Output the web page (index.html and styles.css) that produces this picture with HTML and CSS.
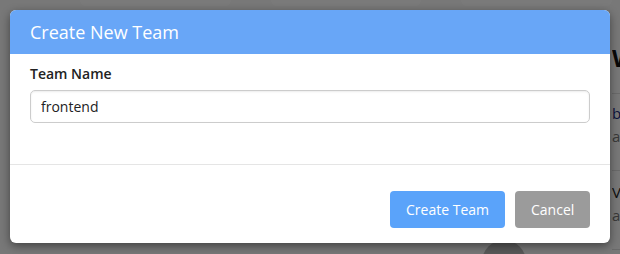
FILE: index.html
```html
<!DOCTYPE html>
<html>
<head>
<meta charset="utf-8">
<link rel="stylesheet" href="styles.css">
</head>
<body>
<div class="page">
  <div class="page-main">
    <div class="tabs">
      <span class="tab"></span><span class="tab"></span><span class="tab"></span>
    </div>
  </div>
  <div class="page-side">
    <div class="side-title">Welcome</div>
    <div class="side-item">
      <div class="side-link">bootstrap</div>
      <div class="side-meta">ago</div>
    </div>
    <div class="side-item">
      <div class="side-link dark">Vault</div>
      <div class="side-meta">ago</div>
    </div>
  </div>
  <div class="avatar"></div>
</div>
<div class="overlay">
  <div class="modal">
    <div class="modal-header">Create New Team</div>
    <div class="modal-body">
      <label class="field-label">Team Name</label>
      <input class="field-input" type="text" value="frontend">
    </div>
    <div class="modal-footer">
      <button class="btn btn-primary">Create Team</button>
      <button class="btn btn-secondary">Cancel</button>
    </div>
  </div>
</div>
</body>
</html>
```
FILE: styles.css
```css
* { box-sizing: border-box; }
html, body { margin: 0; padding: 0; }
body {
  width: 620px;
  height: 254px;
  overflow: hidden;
  font-family: "Open Sans", "Noto Sans", sans-serif;
  background: #fff;
  position: relative;
}
.page {
  display: flex;
  width: 620px;
  height: 254px;
  background: #fafafa;
  overflow: hidden;
  position: relative;
}
.page-main {
  width: 612px;
  flex: none;
}
.tabs {
  display: flex;
  gap: 40px;
  padding-left: 80px;
}
.tab {
  width: 160px;
  height: 6px;
  background: #fff;
  border-radius: 0 0 8px 8px;
}
.page-side {
  flex: 1;
  min-width: 0;
  overflow: hidden;
  white-space: nowrap;
  padding-top: 44px;
}
.side-title {
  font-size: 24px;
  font-weight: 700;
  color: #111;
  line-height: 28px;
  padding-bottom: 21px;
  border-bottom: 1px solid #ddd;
}
.side-item {
  padding: 8px 0 12px;
  border-bottom: 1px solid #ddd;
}
.side-item + .side-item { padding-top: 10px; }
.side-link {
  font-size: 15px;
  color: #1c2b80;
  line-height: 22px;
}
.side-link.dark { color: #222; }
.side-meta {
  font-size: 15px;
  color: #777;
  line-height: 24px;
  padding-bottom: 10px;
}
.avatar {
  position: absolute;
  left: 482px;
  top: 240px;
  width: 44px;
  height: 44px;
  border-radius: 50%;
  background: #bbb;
}
.overlay {
  position: absolute;
  inset: 0;
  background: rgba(0, 0, 0, 0.52);
  padding: 10px;
}
.modal {
  width: 600px;
  height: 233px;
  background: #fff;
  border-radius: 6px;
  box-shadow: 0 3px 10px rgba(0, 0, 0, 0.45);
  overflow: hidden;
  display: flex;
  flex-direction: column;
}
.modal-header {
  height: 44px;
  background: #68a6f7;
  color: #fff;
  font-size: 18px;
  line-height: 44px;
  padding-left: 20px;
}
.modal-body {
  padding: 10px 20px 0;
  height: 111px;
  border-bottom: 1px solid #e5e5e5;
  display: flex;
  flex-direction: column;
}
.field-label {
  font-size: 14px;
  font-weight: 600;
  color: #222;
  line-height: 20px;
  margin-bottom: 6px;
}
.field-input {
  width: 560px;
  height: 33px;
  border: 1px solid #cccccc;
  border-radius: 5px;
  box-shadow: inset 0 1px 2px rgba(0, 0, 0, 0.08);
  padding: 0 10px;
  font-family: "Open Sans", "Noto Sans", sans-serif;
  font-size: 14px;
  color: #222;
  outline: none;
}
.modal-footer {
  display: flex;
  justify-content: flex-end;
  gap: 10px;
  padding: 26px 20px 0;
}
.btn {
  height: 37px;
  border: none;
  border-radius: 4px;
  color: #fff;
  font-family: "Open Sans", "Noto Sans", sans-serif;
  font-size: 14px;
  padding: 0 16px;
  cursor: pointer;
}
.btn-primary { background: #5aa3fa; width: 115px; }
.btn-secondary { background: #9b9b9b; width: 75px; }
```
